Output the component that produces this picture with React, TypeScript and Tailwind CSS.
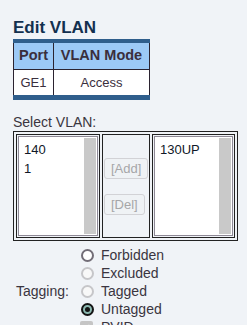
import React from "react";

const font = { fontFamily: '"Liberation Sans", Arial, sans-serif' };

function Radio({ kind }: { kind: "normal" | "disabled" | "checked" }) {
  if (kind === "checked") {
    return (
      <span className="w-[13px] h-[13px] rounded-full border-[2px] border-[#141414] bg-[#8cb9b1] flex items-center justify-center shrink-0">
        <span className="w-[5px] h-[5px] rounded-full bg-[#141414]" />
      </span>
    );
  }
  if (kind === "disabled") {
    return <span className="w-[13px] h-[13px] rounded-full border-[2px] border-[#c6c6c9] bg-[#f8f8f8] shrink-0" />;
  }
  return <span className="w-[13px] h-[13px] rounded-full border-[2px] border-[#726d77] bg-white shrink-0" />;
}

function SelectBox({ items }: { items: string[] }) {
  return (
    <div className="h-full border border-[#222] p-[1px]">
      <div className="h-full border border-[#8e8996] p-[1px] bg-white flex">
        <div className="flex-1 pt-[2px] pl-[4px] text-[13px] leading-[19px] text-[#101828]">
          {items.map((t) => (
            <div key={t}>{t}</div>
          ))}
        </div>
        <div className="w-[12px] bg-[#c9c9c9]" />
      </div>
    </div>
  );
}

export default function App() {
  return (
    <div className="w-[247px] h-[325px] overflow-hidden bg-[#f0f3f7]" style={font}>
      <div className="pl-[13px] pt-[18px] mb-[1px] text-[17px] leading-[20px] font-bold text-[#13304f]">Edit VLAN</div>
      <div className="ml-[13px] w-[137px]">
        <div className="h-[4px] bg-[#2f5e8c]" />
        <div className="flex h-[27px] border-x border-b border-[#2b2330] bg-[#9cc9f6] text-[14.5px] font-bold text-[#3a2f3d]">
          <div className="w-[40px] border-r border-[#2b2330] flex items-center justify-center">Port</div>
          <div className="flex-1 flex items-center justify-center">VLAN Mode</div>
        </div>
        <div className="flex h-[25px] border-x border-[#2b2330] bg-white text-[13px] text-[#3a2f3d]">
          <div className="w-[40px] border-r border-[#2b2330] flex items-center justify-center">GE1</div>
          <div className="flex-1 flex items-center justify-center">Access</div>
        </div>
        <div className="h-[5px] bg-[#2f5e8c]" />
      </div>

      <div className="pl-[13px] mt-[14px] mb-[1px] text-[14px] leading-[16px] text-[#3a3540]">Select VLAN:</div>
      <div className="ml-[13px] w-[225px] h-[110px] border border-[#222] p-[2px] flex gap-[2px]">
        <div className="w-[84px] h-full">
          <SelectBox items={["140", "1"]} />
        </div>
        <div className="w-[48px] h-full border border-[#222] flex flex-col items-start pl-[1px] pt-[23px] gap-[15px]">
          <button className="h-[21px] px-[6px] border border-[#d2d2d6] rounded-[3px] bg-[#eff2f5] text-[13px] leading-[19px] text-[#a6a6a8]">[Add]</button>
          <button className="h-[21px] px-[6px] border border-[#d2d2d6] rounded-[3px] bg-[#eff2f5] text-[13px] leading-[19px] text-[#a6a6a8]">[Del]</button>
        </div>
        <div className="flex-1 h-full">
          <SelectBox items={["130UP"]} />
        </div>
      </div>

      <div className="mt-[5px] flex text-[14px] text-[#3a3540]">
        <div className="w-[81px] pl-[16px] flex items-center">Tagging:</div>
        <div className="flex flex-col">
          {[
            { l: "Forbidden", k: "normal" as const },
            { l: "Excluded", k: "disabled" as const },
            { l: "Tagged", k: "disabled" as const },
            { l: "Untagged", k: "checked" as const },
          ].map((r) => (
            <div key={r.l} className="h-[18px] flex items-center gap-[7px]">
              <Radio kind={r.k} />
              <span>{r.l}</span>
            </div>
          ))}
          <div className="h-[18px] flex items-center gap-[8px] -ml-[1px]">
            <span className="w-[13px] h-[13px] rounded-[2px] bg-[#c5c5c5] flex items-center justify-center shrink-0">
              <svg width="9" height="9" viewBox="0 0 9 9">
                <path d="M1.5 4.5 L3.7 6.7 L7.5 2" stroke="#fff" strokeWidth="1.6" fill="none" />
              </svg>
            </span>
            <span>PVID</span>
          </div>
        </div>
      </div>
    </div>
  );
}
